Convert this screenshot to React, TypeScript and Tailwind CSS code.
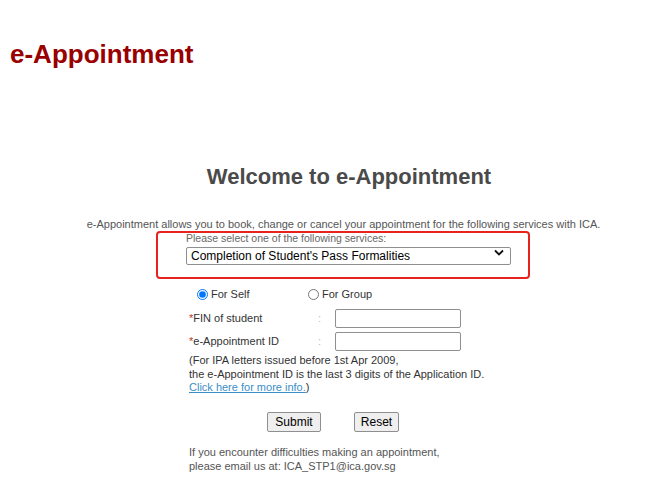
import React from "react";

const Field = ({ label, id }: { label: string; id: string }) => (
  <div className="flex h-[23px] items-center">
    <label htmlFor={id} className="w-[129px] text-[11px] text-[#333]">
      <span className="text-[#c0392b]">*</span>
      {label}
    </label>
    <span className="w-[17px] text-[11px] text-[#bbb]">:</span>
    <input
      id={id}
      type="text"
      className="h-[19px] w-[126px] rounded-[2px] border border-[#8f8f8f] bg-white"
    />
  </div>
);

export default function App() {
  return (
    <div className="min-h-screen w-full bg-white font-['Liberation_Sans',Arial,sans-serif]">
      <h1 className="pl-[10px] pt-[39px] text-[26px] font-bold leading-[30px] text-[#990000]">
        e-Appointment
      </h1>

      <h2 className="mt-[95px] pl-[28px] text-center text-[22px] font-bold leading-[26px] text-[#4a4a4a]">
        Welcome to e-Appointment
      </h2>

      <p className="mt-[28px] pl-[17px] text-center text-[11px] leading-[13px] text-[#555]">
        e-Appointment allows you to book, change or cancel your appointment for the following
        services with ICA.
      </p>

      {/* highlighted service picker */}
      <div className="ml-[156px] h-[48px] w-[374px] rounded-[4px] border-2 border-[#e8231f] pl-[28px]">
        <div className="text-[10.5px] leading-[10px] text-[#666]">
          Please select one of the following services:
        </div>
        <div className="relative w-[325px]">
          <select
            defaultValue="sp"
            className="h-[18px] w-full appearance-none rounded-[2px] border border-[#8f8f8f] bg-white pl-[4px] text-[12px] leading-[16px] text-black"
          >
            <option value="sp">Completion of Student's Pass Formalities</option>
          </select>
          <svg
            className="pointer-events-none absolute right-[7px] top-[6px]"
            width="10"
            height="7"
            viewBox="0 0 10 7"
          >
            <path d="M1 1.5 L5 5.5 L9 1.5" fill="none" stroke="#111" strokeWidth="1.8" />
          </svg>
        </div>
      </div>

      <div className="ml-[189px] mt-[7px]">
        <div className="flex h-[16px] items-center text-[11px] text-[#333]">
          <label className="flex w-[119px] items-center">
            <input type="radio" name="who" defaultChecked className="ml-[8px] mr-[3px] h-[11px] w-[11px]" />
            For Self
          </label>
          <label className="flex items-center">
            <input type="radio" name="who" className="mr-[3px] h-[11px] w-[11px]" />
            For Group
          </label>
        </div>

        <div className="mt-[5px]">
          <Field label="FIN of student" id="fin" />
          <Field label="e-Appointment ID" id="appt" />
        </div>

        <div className="mt-[1px] text-[11px] leading-[13.5px] text-[#333]">
          (For IPA letters issued before 1st Apr 2009,
          <br />
          the e-Appointment ID is the last 3 digits of the Application ID.
          <br />
          <a href="#" className="text-[#3a8fc8] underline">
            Click here for more info.
          </a>
          )
        </div>

        <div className="mt-[17px] flex pl-[78px]">
          <button className="h-[20px] w-[54px] rounded-[2px] border border-[#8f8f8f] bg-[#efefef] text-[12px] text-black">
            Submit
          </button>
          <button className="ml-[33px] h-[20px] w-[45px] rounded-[2px] border border-[#8f8f8f] bg-[#efefef] text-[12px] text-black">
            Reset
          </button>
        </div>

        <div className="mt-[13px] text-[11px] leading-[14px] text-[#555]">
          If you encounter difficulties making an appointment,
          <br />
          please email us at: ICA_STP1@ica.gov.sg
        </div>
      </div>
    </div>
  );
}
